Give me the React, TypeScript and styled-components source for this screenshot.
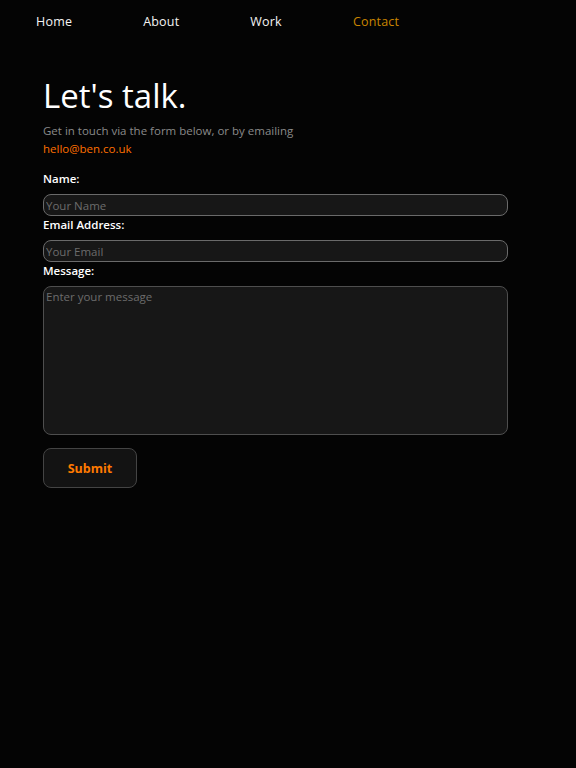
import styled, {createGlobalStyle} from 'styled-components';

const GlobalStyle = createGlobalStyle`
  body {
    margin: 0;
    background: #040404;
    color: #fff;
    font-family: "Open Sans", "Noto Sans", sans-serif;
  }
`;

const Nav = styled.nav`
  display: flex;
  gap: 71px;
  padding: 6px 0 0 36px;
  height: 30px;
  align-items: center;
`;

const NavLink = styled.a<{ $active?: boolean }>`
  font-size: 12.5px;
  letter-spacing: 0.2px;
  color: ${p => p.$active ? '#c98400' : '#f4f4f4'};
  text-decoration: none;
`;

const Main = styled.main`
  width: 465px;
  padding: 38px 0 0 43px;
`;

const Heading = styled.h1`
  margin: 0;
  font-size: 33px;
  font-weight: 400;
  line-height: 44px;
`;

const Intro = styled.p`
  margin: 4px 0 12px;
  font-size: 11.5px;
  line-height: 18px;
  color: #8a8a8a;

  a {
    color: #ff7000;
    text-decoration: none;
  }
`;

const Form = styled.form`
  display: flex;
  flex-direction: column;
`;

const Label = styled.label`
  font-size: 11.5px;
  font-weight: 600;
  line-height: 18px;
  margin-bottom: 6px;
`;

const fieldStyles = `
  box-sizing: border-box;
  width: 100%;
  background: #171717;
  border: 1px solid #6a6a6a;
  border-radius: 8px;
  color: #ddd;
  font-family: "Open Sans", "Noto Sans", sans-serif;
  font-size: 11.5px;
  padding: 0 2px;
  outline: none;

  &::placeholder {
    color: #6c6c6c;
  }
`;

const Input = styled.input`
  ${fieldStyles}
  height: 22px;
`;

const TextArea = styled.textarea`
  ${fieldStyles}
  border-color: #4e4e4e;
  height: 149px;
  padding-top: 2px;
  resize: none;
`;

const Submit = styled.button`
  align-self: flex-start;
  margin-top: 13px;
  width: 94px;
  height: 40px;
  background: #131313;
  border: 1px solid #444;
  border-radius: 8px;
  color: #ff7a00;
  font-family: "Open Sans", "Noto Sans", sans-serif;
  font-size: 12.5px;
  font-weight: 700;
`;

export default function App() {
    return (
        <>
            <GlobalStyle/>
            <Nav>
                <NavLink href="#">Home</NavLink>
                <NavLink href="#">About</NavLink>
                <NavLink href="#">Work</NavLink>
                <NavLink href="#" $active>Contact</NavLink>
            </Nav>
            <Main>
                <Heading>Let's talk.</Heading>
                <Intro>
                    Get in touch via the form below, or by emailing<br/>
                    <a href="#">hello@ben.co.uk</a>
                </Intro>
                <Form onSubmit={e => e.preventDefault()}>
                    <Label htmlFor="name">Name:</Label>
                    <Input id="name" placeholder="Your Name"/>
                    <Label htmlFor="email">Email Address:</Label>
                    <Input id="email" placeholder="Your Email"/>
                    <Label htmlFor="message">Message:</Label>
                    <TextArea id="message" placeholder="Enter your message"/>
                    <Submit type="submit">Submit</Submit>
                </Form>
            </Main>
        </>
    );
}
